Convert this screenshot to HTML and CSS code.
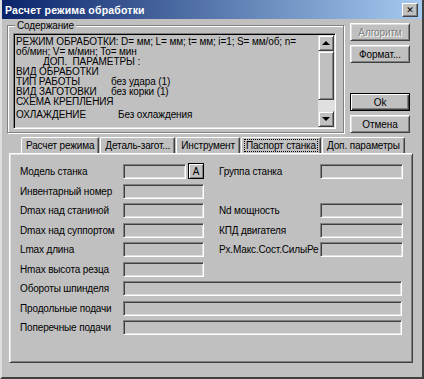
FILE: index.html
```html
<!DOCTYPE html>
<html lang="ru">

<head>
    <meta charset="UTF-8">
    <title>Расчет режима обработки</title>
    <link rel="stylesheet" href="styles.css">
</head>

<body>
    <div class="window">
        <div class="titlebar">
            <span class="title">Расчет режима обработки</span>
            <button class="close-btn">&#x2715;</button>
        </div>

        <div class="main">
            <div class="top-row">
                <fieldset class="group">
                    <legend>Содержание</legend>
                    <div class="memo">
                        <div class="memo-text">
                            <div>РЕЖИМ ОБРАБОТКИ: D= мм; L= мм; t= мм; i=1; S= мм/об; n=</div>
                            <div>об/мин; V= м/мин; To= мин</div>
                            <div class="indent">ДОП.&nbsp; ПАРАМЕТРЫ :</div>
                            <div>ВИД ОБРАБОТКИ</div>
                            <div><span class="key">ТИП РАБОТЫ</span>без удара (1)</div>
                            <div><span class="key">ВИД ЗАГОТОВКИ</span>без корки (1)</div>
                            <div>СХЕМА КРЕПЛЕНИЯ</div>
                            <div class="last"><span class="key wide">ОХЛАЖДЕНИЕ</span>Без охлаждения</div>
                        </div>
                        <div class="scrollbar">
                            <div class="sb-btn"><span class="arrow up"></span></div>
                            <div class="sb-thumb"></div>
                            <div class="sb-track"></div>
                            <div class="sb-btn"><span class="arrow down"></span></div>
                        </div>
                    </div>
                </fieldset>

                <div class="side-buttons">
                    <button class="btn disabled">Алгоритм</button>
                    <button class="btn">Формат...</button>
                    <button class="btn default ok">Ok</button>
                    <button class="btn">Отмена</button>
                </div>
            </div>

            <div class="tabs">
                <div class="tab">Расчет режима</div>
                <div class="tab">Деталь-загот...</div>
                <div class="tab">Инструмент</div>
                <div class="tab active"><span class="focus">Паспорт станка</span></div>
                <div class="tab">Доп. параметры</div>
            </div>

            <div class="panel">
                <div class="form">
                    <label>Модель станка</label>
                    <div class="with-btn">
                        <div class="field"></div>
                        <button class="small-btn">A</button>
                    </div>
                    <label class="right">Группа станка</label>
                    <div class="field"></div>

                    <label>Инвентарный номер</label>
                    <div class="field"></div>
                    <span></span>
                    <span></span>

                    <label>Dmax над станиной</label>
                    <div class="field"></div>
                    <label class="right">Nd мощность</label>
                    <div class="field"></div>

                    <label>Dmax над суппортом</label>
                    <div class="field"></div>
                    <label class="right">КПД двигателя</label>
                    <div class="field"></div>

                    <label>Lmax длина</label>
                    <div class="field"></div>
                    <label class="right">Рх.Макс.Сост.СилыРе</label>
                    <div class="field"></div>

                    <label>Hmax высота резца</label>
                    <div class="field"></div>
                    <span></span>
                    <span></span>

                    <label>Обороты шпинделя</label>
                    <div class="field full"></div>

                    <label>Продольные подачи</label>
                    <div class="field full"></div>

                    <label>Поперечные подачи</label>
                    <div class="field full"></div>
                </div>
            </div>
        </div>
    </div>
</body>

</html>
```

FILE: styles.css
```css
body {
    margin: 0;
    font-family: "Liberation Sans", Arial, sans-serif;
    font-size: 10px;
    letter-spacing: -0.15px;
    color: #000;
}

.window {
    width: 424px;
    height: 379px;
    box-sizing: border-box;
    background: #c0c0c0;
    border: 2px solid;
    border-top: 0;
    border-color: #dfdfdf #404040 #404040 #dfdfdf;
    display: flex;
    flex-direction: column;
}

.titlebar {
    height: 19px;
    flex: none;
    display: flex;
    align-items: center;
    padding: 0 4px 0 3px;
    background: linear-gradient(to right, #0a246a, #a6caf0);
    color: #fff;
}

.title {
    font-weight: bold;
    font-size: 10.5px;
    letter-spacing: 0.2px;
}

.close-btn {
    margin-left: auto;
    width: 16px;
    height: 14px;
    padding: 0;
    background: #c0c0c0;
    border: 1px solid;
    border-color: #fff #404040 #404040 #fff;
    box-shadow: inset -1px -1px 0 #808080;
    font-size: 9px;
    font-weight: bold;
    line-height: 12px;
    color: #000;
    font-family: "DejaVu Sans", sans-serif;
}

.main {
    flex: 1;
    display: flex;
    flex-direction: column;
    padding: 0 5px 14px 5px;
}

.top-row {
    display: flex;
    gap: 6px;
}

/* group box with etched border */
.group {
    width: 337px;
    box-sizing: border-box;
    margin: 0;
    padding: 1px 7px 3px 5px;
    border: 1px solid #808080;
    box-shadow: inset 1px 1px 0 #fff, 1px 1px 0 #fff;
}

.group legend {
    padding: 0 2px;
    margin-left: 2px;
    line-height: 13px;
    background: #c0c0c0;
}

.memo {
    height: 96px;
    box-sizing: border-box;
    display: flex;
    border: 1px solid;
    border-color: #808080 #fff #fff #808080;
    box-shadow: inset 1px 1px 0 #000, inset -1px -1px 0 #dfdfdf;
    padding: 1px;
}

.memo-text {
    flex: 1;
    padding: 2px 0 0 1px;
    font-size: 10px;
    line-height: 10px;
    letter-spacing: -0.1px;
    white-space: nowrap;
    overflow: hidden;
}

.memo-text .indent {
    padding-left: 27px;
}

.memo-text .key {
    display: inline-block;
    width: 95px;
}

.memo-text .key.wide {
    width: 102px;
}

.memo-text .last {
    margin-top: 3px;
}

.scrollbar {
    width: 16px;
    display: flex;
    flex-direction: column;
}

.sb-btn,
.sb-thumb {
    box-sizing: border-box;
    background: #c0c0c0;
    border: 1px solid;
    border-color: #dfdfdf #404040 #404040 #dfdfdf;
    box-shadow: inset 1px 1px 0 #fff, inset -1px -1px 0 #808080;
}

.sb-btn {
    height: 16px;
    display: flex;
    align-items: center;
    justify-content: center;
}

.sb-thumb {
    height: 49px;
}

.sb-track {
    flex: 1;
    background: #e0e0e0;
}

.arrow {
    width: 0;
    height: 0;
    border-left: 4px solid transparent;
    border-right: 4px solid transparent;
}

.arrow.up {
    border-bottom: 4px solid #000;
}

.arrow.down {
    border-top: 4px solid #000;
}

.side-buttons {
    width: 60px;
    padding-top: 4px;
    display: flex;
    flex-direction: column;
    gap: 4px;
}

.btn {
    height: 18px;
    padding: 0;
    background: #c0c0c0;
    border: 1px solid;
    border-color: #fff #404040 #404040 #fff;
    box-shadow: inset 1px 1px 0 #dfdfdf, inset -1px -1px 0 #808080;
    font-family: inherit;
    font-size: 10px;
    letter-spacing: -0.1px;
    color: #000;
}

.btn.disabled {
    color: #808080;
    text-shadow: 1px 1px 0 #fff;
}

.btn.default {
    border-color: #000;
    box-shadow: inset 1px 1px 0 #fff, inset -1px -1px 0 #404040, inset -2px -2px 0 #808080;
}

.btn.ok {
    margin-top: 26px;
}

.tabs {
    display: flex;
    margin: 4px 0 0 14px;
    height: 16px;
}

.tab {
    box-sizing: border-box;
    height: 16px;
    padding: 1px 4px 0 4px;
    margin-right: 1px;
    border-top: 1px solid #fff;
    border-left: 1px solid #fff;
    border-right: 1px solid #404040;
    border-top-left-radius: 2px;
    border-top-right-radius: 2px;
    box-shadow: inset -1px 0 0 #808080;
    white-space: nowrap;
    line-height: 13px;
}

.tab.active {
    padding: 1px 2px 0 2px;
}

.tab .focus {
    display: inline-block;
    padding: 0 1px;
    line-height: 11px;
    border: 1px dotted #000;
}

.panel {
    flex: 1;
    margin-left: 2px;
    width: 404px;
    box-sizing: border-box;
    border: 1px solid;
    border-color: #fff #404040 #404040 #fff;
    box-shadow: inset 1px 1px 0 #dfdfdf, inset -1px -1px 0 #808080;
    padding: 10px 0 0 10px;
}

.form {
    display: grid;
    grid-template-columns: 103px 81px 116px 83px;
    grid-auto-rows: 15px;
    row-gap: 4.5px;
}

.form label {
    line-height: 15px;
    white-space: nowrap;
    overflow: hidden;
}

.form label.right {
    padding-left: 15px;
}

.field {
    box-sizing: border-box;
    height: 15px;
    border: 1px solid;
    border-color: #808080 #fff #fff #808080;
    box-shadow: inset 1px 1px 0 #404040, inset -1px -1px 0 #dfdfdf;
}

.field.full {
    grid-column: 2 / 5;
    margin-right: 1px;
}

.with-btn {
    display: flex;
    gap: 2px;
}

.with-btn .field {
    flex: 1;
}

.small-btn {
    width: 16px;
    height: 16px;
    margin-top: -1px;
    padding: 0;
    background: #c0c0c0;
    border: 1px solid #000;
    box-shadow: inset 1px 1px 0 #fff, inset -1px -1px 0 #808080;
    font-family: inherit;
    font-size: 10px;
    color: #000;
}
```
